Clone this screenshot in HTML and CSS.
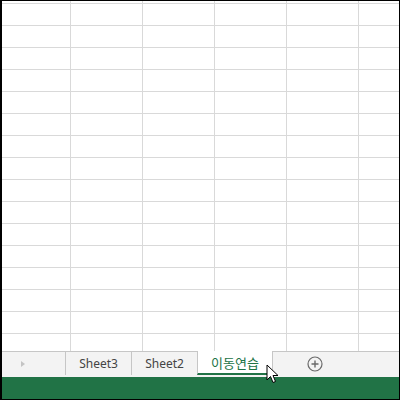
FILE: index.html
```html
<!DOCTYPE html>
<html lang="ko">
<head>
  <meta charset="UTF-8" />
  <title>Excel - 이동연습</title>
  <link rel="stylesheet" href="styles.css">
</head>
<body>
  <div class="window">
    <div class="sheet"></div>

    <div class="tabbar">
      <div class="tab-nav">
        <span class="nav-arrow"></span>
      </div>
      <div class="tab">Sheet3</div>
      <div class="tab">Sheet2</div>
      <div class="tab active">이동연습</div>
      <button class="add-sheet" title="새 시트">
        <svg width="16" height="16" viewBox="0 0 16 16">
          <circle cx="8" cy="8" r="7" fill="none" stroke="#6a6a6a" stroke-width="1.2"/>
          <path d="M8 4.5v7M4.5 8h7" stroke="#6a6a6a" stroke-width="1.4"/>
        </svg>
      </button>
    </div>

    <div class="statusbar"></div>

    <svg class="cursor" width="13" height="20" viewBox="0 0 13 20">
      <path d="M1 1 L1 16 L4.5 12.5 L7 18.5 L9.5 17.5 L7 11.5 L12 11.5 Z" fill="#fff" stroke="#000" stroke-width="1" stroke-linejoin="round"/>
    </svg>
  </div>
</body>
</html>
```

FILE: styles.css
```css
:root {
  --green: #217346;
  --grid: #d9d9d9;
  --tab-line: #c6c6c6;
  --tab-bg: #f3f3f3;
  --text: #444444;
}

* {
  box-sizing: border-box;
  margin: 0;
  padding: 0;
}

body {
  font-family: "Noto Sans", "Noto Sans CJK KR", sans-serif;
  background: #fff;
}

.window {
  position: relative;
  width: 400px;
  height: 400px;
  border: 1px solid #000;
  border-left-width: 2px;
  display: flex;
  flex-direction: column;
  overflow: hidden;
}

/* cell grid */
.sheet {
  height: 350px;
  background-color: #fff;
  background-image:
    linear-gradient(to right, var(--grid) 1px, transparent 1px),
    linear-gradient(to bottom, var(--grid) 1px, transparent 1px);
  background-size: 72px 100%, 100% 22px;
  background-position: 68px 0, 0 2px;
}

.tabbar {
  height: 26px;
  background: var(--tab-bg);
  border-top: 1px solid var(--tab-line);
  display: flex;
  align-items: flex-start;
}

.tab-nav {
  width: 63px;
  height: 23px;
  display: flex;
  align-items: center;
  padding-left: 19px;
}

.nav-arrow {
  width: 0;
  height: 0;
  border-top: 3px solid transparent;
  border-bottom: 3px solid transparent;
  border-left: 4px solid #c4c4c4;
}

.tab {
  width: 66px;
  height: 23px;
  border-left: 1px solid var(--tab-line);
  display: flex;
  align-items: center;
  justify-content: center;
  font-size: 12px;
  color: var(--text);
}

.tab.active {
  width: 76px;
  height: 24px;
  margin-top: -1px;
  padding-top: 1px;
  background: #fff;
  border-right: 1px solid var(--tab-line);
  border-bottom: 2px solid var(--green);
  color: var(--green);
  font-size: 13px;
}

.add-sheet {
  margin-left: 34px;
  width: 16px;
  height: 23px;
  border: none;
  background: none;
  display: flex;
  align-items: center;
  justify-content: center;
  cursor: pointer;
}

.statusbar {
  height: 22px;
  background: var(--green);
}

.cursor {
  position: absolute;
  left: 264px;
  top: 363px;
}
```
